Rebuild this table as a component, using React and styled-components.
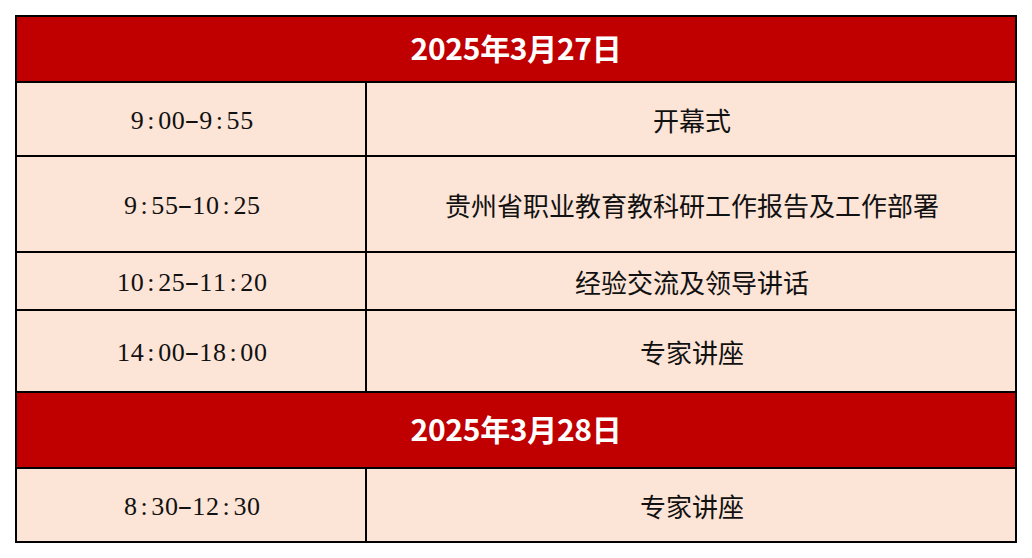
import React from "react"
import styled, { createGlobalStyle } from "styled-components"

const GlobalStyle = createGlobalStyle`
    html, body {
        margin: 0;
        padding: 0;
        background: #ffffff;
    }
`

const schedule = [
    {
        date: "2025年3月27日",
        height: 64,
        rows: [
            { time: "9:00-9:55", title: "开幕式", height: 72 },
            { time: "9:55-10:25", title: "贵州省职业教育教科研工作报告及工作部署", height: 94 },
            { time: "10:25-11:20", title: "经验交流及领导讲话", height: 56 },
            { time: "14:00-18:00", title: "专家讲座", height: 80 },
        ],
    },
    {
        date: "2025年3月28日",
        height: 74,
        rows: [{ time: "8:30-12:30", title: "专家讲座", height: 72 }],
    },
]

export default function App() {
    return (
        <Page>
            <GlobalStyle />
            <Table>
                {schedule.map((day) => (
                    <React.Fragment key={day.date}>
                        <DateCell $h={day.height}>{day.date}</DateCell>
                        {day.rows.map((row) => (
                            <React.Fragment key={row.time}>
                                <TimeCell $h={row.height}>
                                    {row.time.split("").map((ch, i) =>
                                        ch === "-" ? (
                                            <Dash key={i}>{ch}</Dash>
                                        ) : (
                                            <Glyph key={i}>{ch}</Glyph>
                                        )
                                    )}
                                </TimeCell>
                                <TitleCell $h={row.height}>{row.title}</TitleCell>
                            </React.Fragment>
                        ))}
                    </React.Fragment>
                ))}
            </Table>
        </Page>
    )
}

const Page = styled.div`
    padding: 15px;
`

const Table = styled.div`
    display: grid;
    grid-template-columns: 348px 648px;
    gap: 2px;
    padding: 2px;
    width: fit-content;
    background: #000000;
`

const DateCell = styled.div`
    grid-column: 1 / -1;
    height: ${(p) => p.$h}px;
    display: flex;
    align-items: center;
    justify-content: center;
    padding-bottom: 4px;
    box-sizing: border-box;
    background: #c00000;
    color: #ffffff;
    font-family: "Noto Sans CJK SC", "Noto Sans", sans-serif;
    font-weight: 700;
    font-size: 30px;
    letter-spacing: -0.3px;
`

const Cell = styled.div`
    height: ${(p) => p.$h}px;
    box-sizing: border-box;
    display: flex;
    align-items: center;
    justify-content: center;
    background: #fce4d6;
    color: #111111;
`

const TimeCell = styled(Cell)`
    font-family: "Liberation Serif", serif;
    font-size: 26px;
    padding: 4px 0 0 2px;
`

const Glyph = styled.span`
    display: inline-block;
    width: 13.7px;
    text-align: center;
`

const Dash = styled(Glyph)`
    transform: scaleX(1.7) translateY(-1px);
`

const TitleCell = styled(Cell)`
    font-family: "Noto Sans CJK SC", sans-serif;
    font-size: 26px;
    font-weight: 400;
    padding: 0 0 0 2px;
`
